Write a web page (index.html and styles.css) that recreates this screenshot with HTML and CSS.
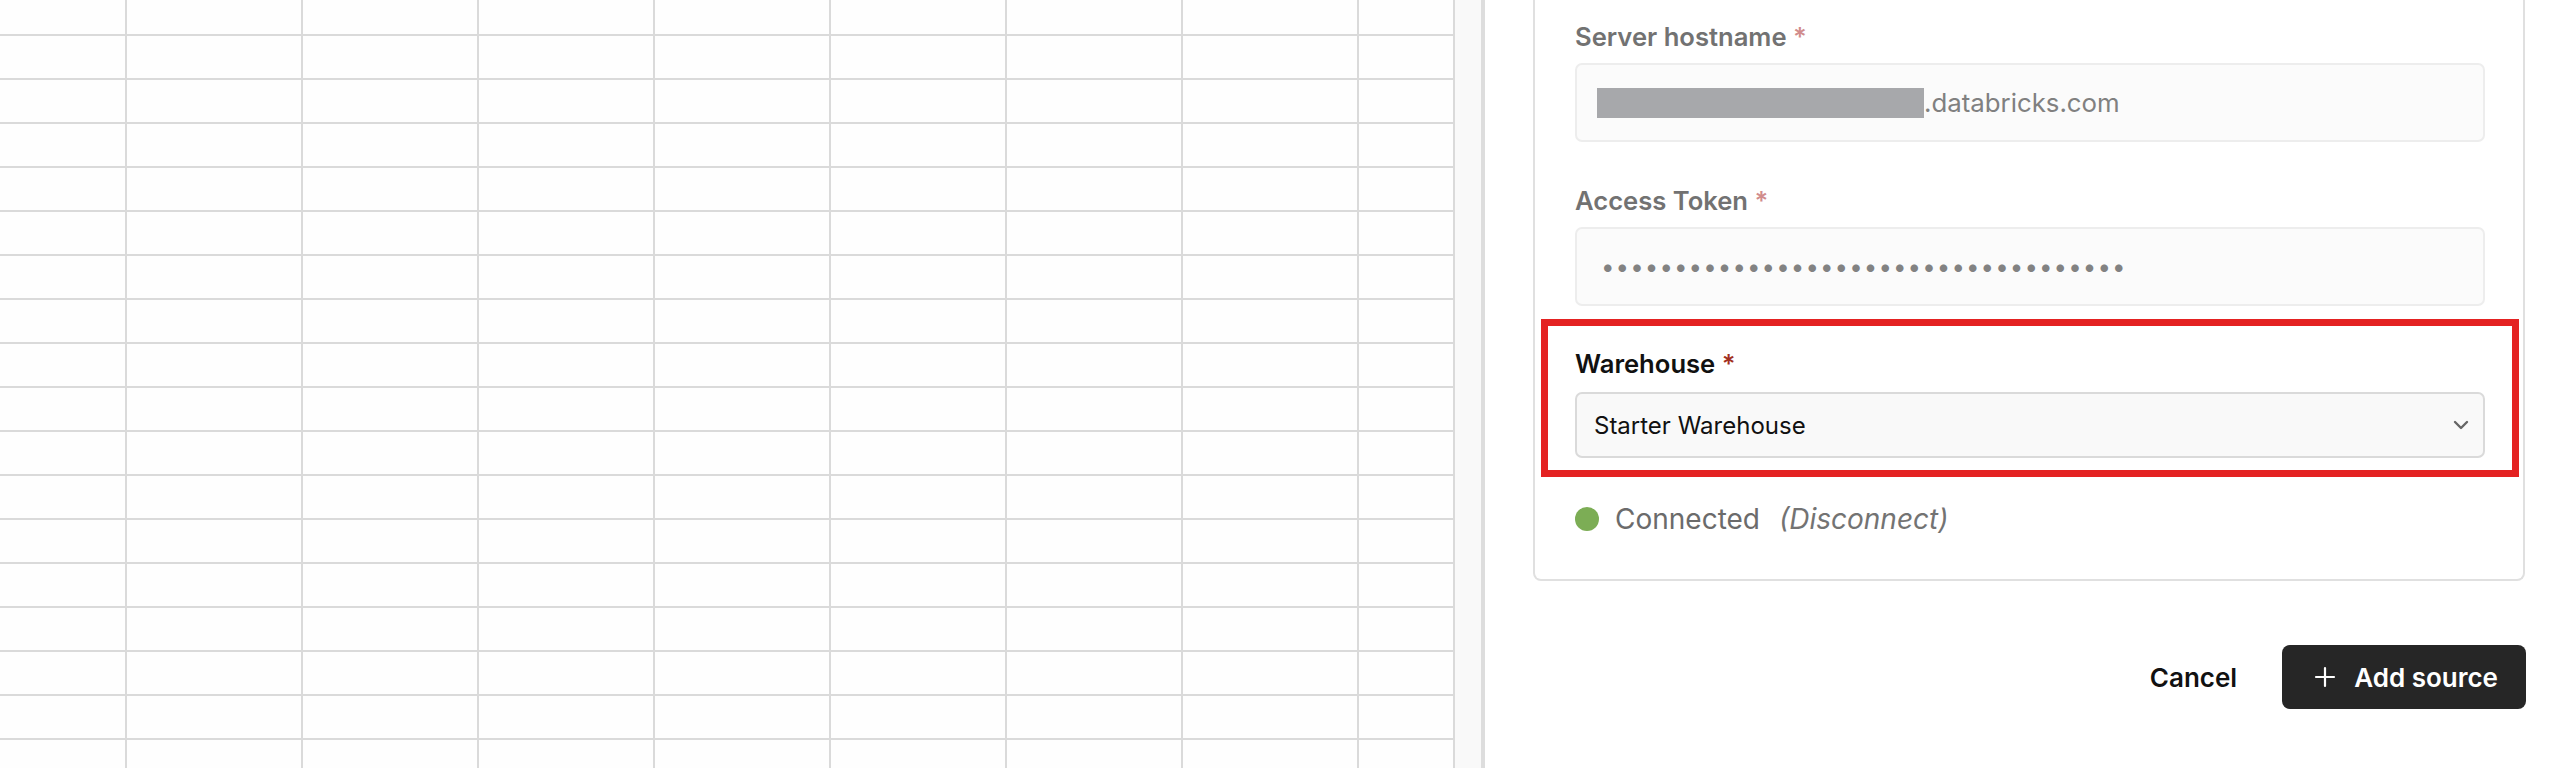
FILE: index.html
```html
<!DOCTYPE html>
<html lang="en">
<head>
    <meta charset="UTF-8">
    <meta name="viewport" content="width=device-width, initial-scale=1.0">
    <title>Add source - Databricks</title>
    <link rel="stylesheet" href="styles.css">
</head>
<body>
    <div class="page">
        <div class="sheet"></div>
        <div class="sheet-scroll"></div>

        <div class="panel">
            <div class="source-card">
                <div class="field disabled">
                    <label class="field-label">Server hostname <span class="req">*</span></label>
                    <div class="text-input"><span class="redacted"></span>.databricks.com</div>
                </div>

                <div class="field disabled">
                    <label class="field-label">Access Token <span class="req">*</span></label>
                    <div class="text-input token">••••••••••••••••••••••••••••••••••••</div>
                </div>

                <div class="highlight">
                    <div class="field">
                        <label class="field-label">Warehouse <span class="req">*</span></label>
                        <div class="select-input">
                            <span>Starter Warehouse</span>
                            <svg class="chevron" width="16" height="10" viewBox="0 0 16 10">
                                <path d="M2 2 L8 8 L14 2" fill="none" stroke="#666" stroke-width="2.4" stroke-linecap="round" stroke-linejoin="round"/>
                            </svg>
                        </div>
                    </div>
                </div>

                <div class="status">
                    <span class="status-dot"></span>
                    <span class="status-text">Connected</span>
                    <span class="status-link">(Disconnect)</span>
                </div>
            </div>

            <div class="actions">
                <button class="cancel-button">Cancel</button>
                <button class="add-button">
                    <svg width="22" height="22" viewBox="0 0 22 22">
                        <path d="M11 2 V20 M2 11 H20" stroke="#fff" stroke-width="2.2" stroke-linecap="round"/>
                    </svg>
                    Add source
                </button>
            </div>
        </div>
    </div>
</body>
</html>
```

FILE: styles.css
```css
body {
    margin: 0;
    font-family: Inter, "Noto Sans", sans-serif;
    background-color: white;
    overflow: hidden;
}
.page {
    display: flex;
    height: 768px;
}
.sheet {
    width: 1453px;
    height: 100%;
    border-right: 2px solid #dadada;
    background-color: #fefefe;
    background-image:
        linear-gradient(to right, #dadada 0 2px, transparent 2px),
        linear-gradient(to bottom, #dadada 0 2px, transparent 2px);
    background-size: 176px 100%, 100% 44px;
    background-position: 125px 0, 0 34px;
}
.sheet-scroll {
    width: 26px;
    background-color: #f9f9f9;
    border-right: 4px solid #dddddd;
}
.panel {
    flex: 1;
    padding: 0 49px 0 48px;
}
.source-card {
    border: 2px solid #e0e0e0;
    border-top: none;
    border-radius: 0 0 8px 8px;
    padding: 19px 38px 42px 40px;
}
.field + .field {
    margin-top: 41px;
}
.field-label {
    display: block;
    font-size: 25.6px;
    line-height: 36px;
    font-weight: 600;
    color: #111;
    margin-bottom: 8px;
}
.req {
    color: #a2301f;
}
.disabled .field-label {
    color: #727272;
}
.disabled .req {
    color: #d18c8c;
}
.text-input {
    display: flex;
    align-items: center;
    height: 79px;
    box-sizing: border-box;
    padding: 0 20px;
    border: 2px solid #ededed;
    border-radius: 7px;
    background-color: #fbfbfb;
    font-size: 25.8px;
    color: #808080;
}
.redacted {
    display: inline-block;
    width: 327px;
    height: 30px;
    background-color: #a7a8ab;
}
.token {
    padding-left: 24px;
    font-size: 24px;
    letter-spacing: 1.1px;
    color: #828282;
}
.highlight {
    margin: 13px -34px 0;
    padding: 20px 27px 12px;
    border: 7px solid #e42222;
}
.highlight .field-label {
    margin-bottom: 10px;
}
.select-input {
    display: flex;
    align-items: center;
    justify-content: space-between;
    height: 66px;
    box-sizing: border-box;
    padding: 0 14px 0 17px;
    border: 2px solid #dadada;
    border-radius: 7px;
    background-color: #f9f9f9;
    font-size: 24px;
    color: #111;
}
.status {
    display: flex;
    align-items: center;
    margin-top: 24px;
    font-size: 28px;
    line-height: 36px;
    color: #6b6b6b;
}
.status-dot {
    width: 24px;
    height: 24px;
    border-radius: 50%;
    background-color: #7cad55;
    margin-right: 16px;
}
.status-link {
    margin-left: 19px;
    font-style: italic;
    color: #737373;
}
.actions {
    display: flex;
    justify-content: flex-end;
    align-items: center;
    gap: 45px;
    margin-top: 64px;
    margin-right: -1px;
}
.cancel-button {
    padding: 0;
    border: none;
    background: none;
    font-family: inherit;
    font-size: 26px;
    font-weight: 600;
    color: #111;
    cursor: pointer;
}
.add-button {
    display: flex;
    align-items: center;
    gap: 18px;
    height: 64px;
    padding: 0 28px 0 32px;
    border: none;
    border-radius: 8px;
    background-color: #262626;
    font-family: inherit;
    font-size: 26px;
    font-weight: 600;
    color: white;
    cursor: pointer;
}
```
